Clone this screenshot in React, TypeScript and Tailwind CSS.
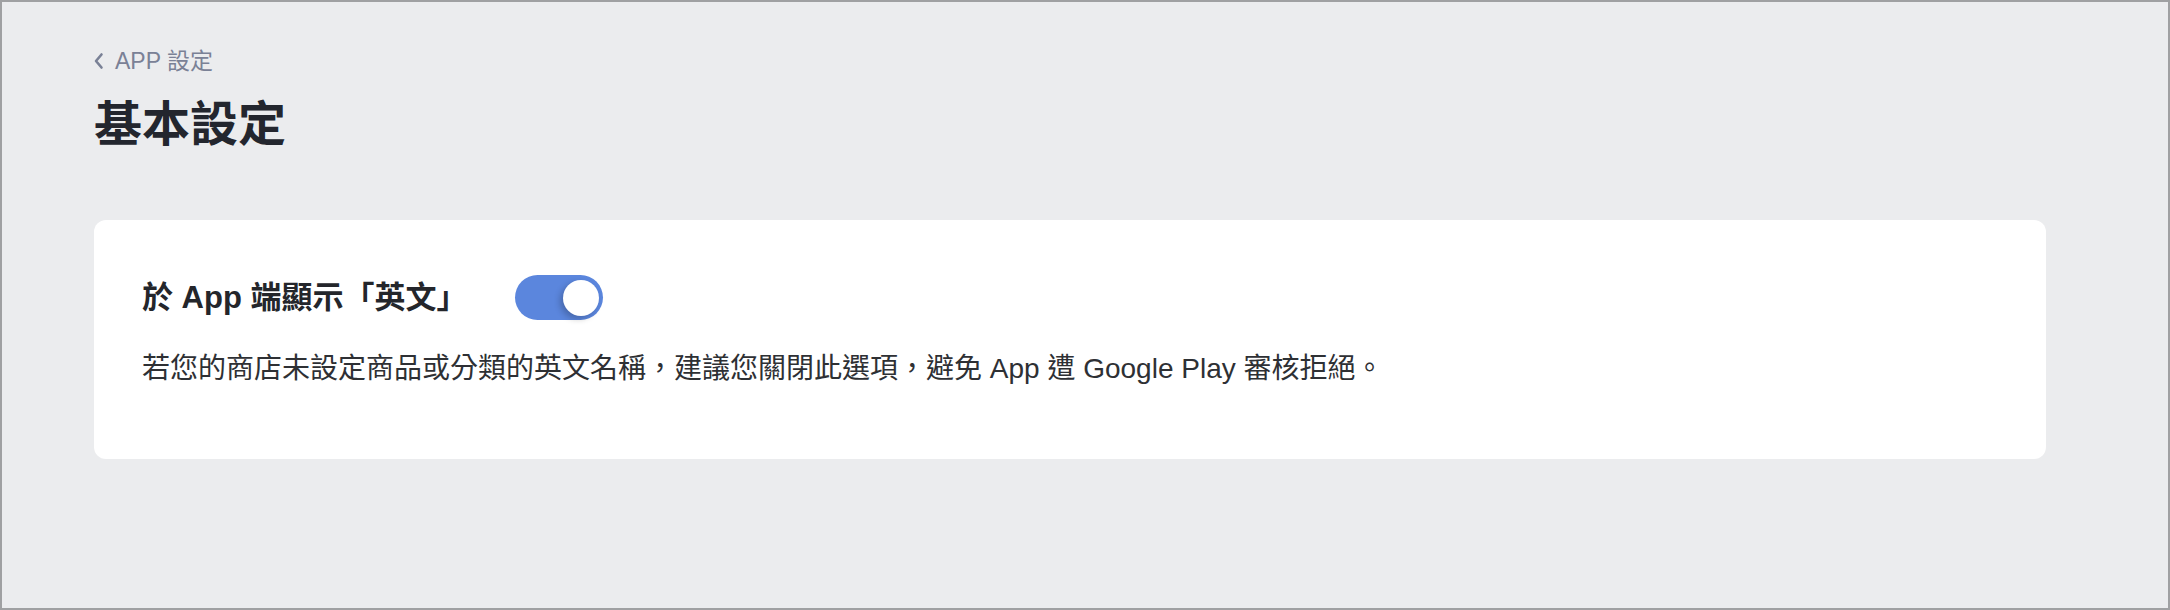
import React, { useState } from 'react';

const FONT = { fontFamily: '"Liberation Sans", "Noto Sans CJK TC", sans-serif' };

const Toggle: React.FC<{ on: boolean; onChange: (v: boolean) => void }> = ({ on, onChange }) => (
  <button
    type="button"
    onClick={() => onChange(!on)}
    className={`relative flex h-[45px] w-[88px] shrink-0 items-center rounded-full px-[4px] ${on ? 'justify-end bg-[#5b86dd]' : 'justify-start bg-[#c9ccd3]'}`}
  >
    <span className="block h-[36px] w-[36px] rounded-full bg-white shadow-[-3px_3px_6px_rgba(0,0,0,0.22)]" />
  </button>
);

const App: React.FC = () => {
  const [showEnglish, setShowEnglish] = useState(true);

  return (
    <div style={FONT} className="h-[610px] w-full border-2 border-[#9fa0a2] bg-[#ebecee]">
      <div className="pl-[92px] pr-[122px] pt-[44px]">
        {/* breadcrumb */}
        <a href="#" className="flex h-[30px] items-center gap-[11px] text-[23px] text-[#7a8196]">
          <svg width="10" height="18" viewBox="0 0 10 18" fill="none" stroke="currentColor" strokeWidth="2.6" strokeLinecap="round" strokeLinejoin="round">
            <path d="M7.5 2.5 L2 9 L7.5 15.5" />
          </svg>
          <span>APP 設定</span>
        </a>
        <h1 className="mt-[21px] h-[56px] text-[48px] font-bold leading-[56px] text-[#23262e]">基本設定</h1>

        {/* card */}
        <div className="mt-[67px] rounded-[12px] bg-white pb-[70px] pl-[48px] pr-[48px] pt-[55px]">
          <div className="flex items-center gap-[48px]">
            <span className="text-[31px] font-bold leading-[45px] text-[#24262b]">於 App 端顯示「英文」</span>
            <Toggle on={showEnglish} onChange={setShowEnglish} />
          </div>
          <p className="mt-[29px] text-[28px] leading-[40px] text-[#2e3034]">
            若您的商店未設定商品或分類的英文名稱，建議您關閉此選項，避免 App 遭 Google Play 審核拒絕。
          </p>
        </div>
      </div>
    </div>
  );
};

export default App;
